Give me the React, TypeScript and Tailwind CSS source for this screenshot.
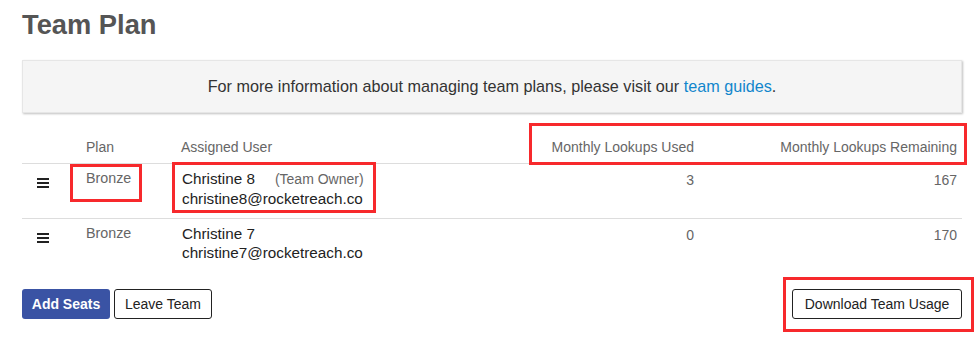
const font = { fontFamily: '"Liberation Sans", Arial, sans-serif' };

type Member = { name: string; email: string; owner?: boolean; used: number; remaining: number };

const members: Member[] = [
  { name: "Christine 8", email: "christine8@rocketreach.co", owner: true, used: 3, remaining: 167 },
  { name: "Christine 7", email: "christine7@rocketreach.co", used: 0, remaining: 170 },
];

const cols = "grid grid-cols-[59px_95px_1fr_200px_263px]";

function Hamburger() {
  return (
    <svg width="12" height="10" viewBox="0 0 12 10" className="mt-[9px]">
      <rect x="0" y="0" width="12" height="2" fill="#222" />
      <rect x="0" y="4" width="12" height="2" fill="#222" />
      <rect x="0" y="8" width="12" height="2" fill="#222" />
    </svg>
  );
}

// red annotation boxes drawn over the screenshot
function Mark({ className }: { className: string }) {
  return <div className={`pointer-events-none absolute border-[3px] border-[#f7292c] ${className}`} />;
}

export default function App() {
  return (
    <div style={font} className="relative h-[357px] w-[979px] overflow-hidden bg-white pl-[22px] pr-[17px] pt-[9px] text-[#222]">
      <h1 className="text-[27.3px] font-bold leading-[32px] text-[#555]">Team Plan</h1>

      <div className="mt-[19px] flex h-[53px] items-center justify-center border border-[#e6e6e6] bg-[#f5f5f5] text-[16.2px] text-[#333] shadow-[1px_1px_2px_rgba(0,0,0,0.25)]">
        <p>
          For more information about managing team plans, please visit our{" "}
          <a className="text-[#1186cc]">team guides</a>.
        </p>
      </div>

      <div className="mt-[24px] text-[14px]">
        <div className={`${cols} border-b border-[#ddd] pb-[6px] leading-[20px] text-[#666]`}>
          <div />
          <div className="pl-[5px]">Plan</div>
          <div className="pl-[5px]">Assigned User</div>
          <div className="pr-[5px] text-right">Monthly Lookups Used</div>
          <div className="pr-[5px] text-right">Monthly Lookups Remaining</div>
        </div>
        {members.map((m, i) => (
          <div
            key={m.email}
            className={`${cols} pb-[10px] pt-[5px] ${i < members.length - 1 ? "border-b border-[#ddd]" : ""}`}
          >
            <div className="pl-[15px]">
              <Hamburger />
            </div>
            <div className="pl-[5px] text-[14.3px] leading-[19px] text-[#666]">Bronze</div>
            <div className="pl-[6px] text-[15.25px] leading-[19px] text-[#222]">
              <div className="flex items-baseline">
                <span>{m.name}</span>
                {m.owner ? <span className="ml-[20px] text-[14px] text-[#666]">(Team Owner)</span> : null}
              </div>
              <div>{m.email}</div>
            </div>
            <div className="pr-[5px] pt-[2px] text-right leading-[19px] text-[#666]">{m.used}</div>
            <div className="pr-[5px] pt-[2px] text-right leading-[19px] text-[#666]">{m.remaining}</div>
          </div>
        ))}
      </div>

      <div className="mt-[17px] flex items-center text-[14px]">
        <button className="h-[30px] w-[88px] rounded-[3px] bg-[#3a53a4] font-bold text-white">Add Seats</button>
        <button className="ml-[4px] h-[30px] w-[98px] rounded-[3px] border border-[#222] bg-white text-[#222]">Leave Team</button>
        <button className="ml-auto h-[30px] w-[170px] rounded-[3px] border border-[#222] bg-white text-[#222]">Download Team Usage</button>
      </div>

      <Mark className="left-[70px] top-[164px] h-[38px] w-[72px]" />
      <Mark className="left-[172px] top-[162px] h-[51px] w-[204px]" />
      <Mark className="left-[529px] top-[123px] h-[42px] w-[438px]" />
      <Mark className="left-[783px] top-[277px] h-[55px] w-[191px]" />
    </div>
  );
}
